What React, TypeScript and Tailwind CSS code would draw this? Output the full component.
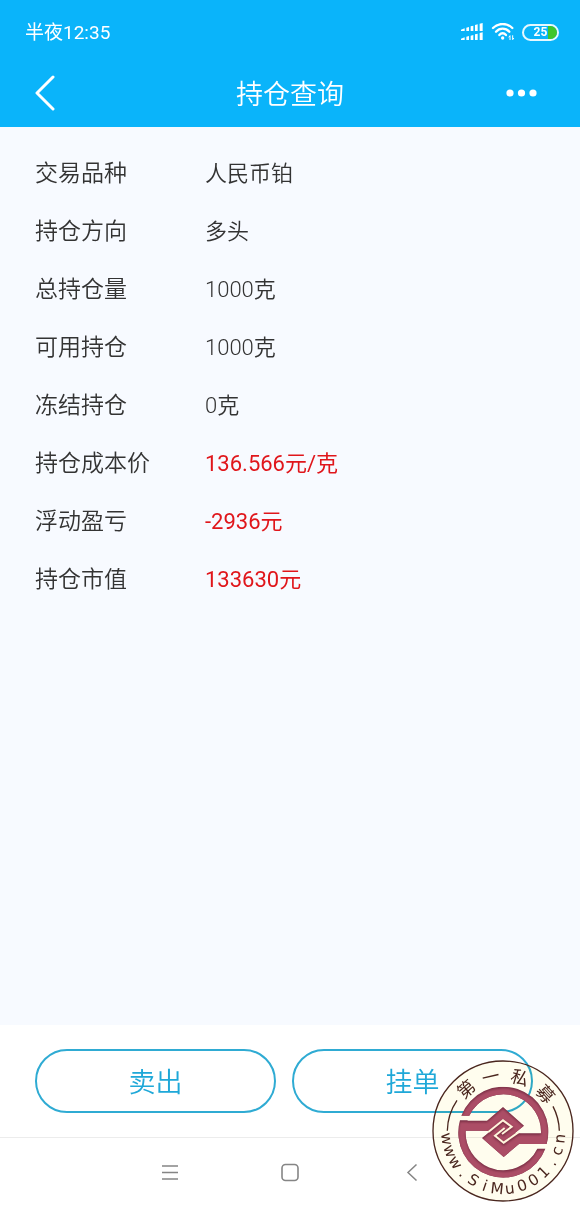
import React from 'react';

interface PositionRow {
  label: string;
  value: string;
  highlight?: boolean;
}

const rows: PositionRow[] = [
  { label: '交易品种', value: '人民币铂' },
  { label: '持仓方向', value: '多头' },
  { label: '总持仓量', value: '1000克' },
  { label: '可用持仓', value: '1000克' },
  { label: '冻结持仓', value: '0克' },
  { label: '持仓成本价', value: '136.566元/克', highlight: true },
  { label: '浮动盈亏', value: '-2936元', highlight: true },
  { label: '持仓市值', value: '133630元', highlight: true }
];

const SignalIcon: React.FC = () => (
  <svg className="w-6 h-[18px]" viewBox="0 0 72 54" fill="currentColor" aria-hidden="true">
    <path d="M3 20l11-4v8H3zM19 14l8-2v12h-8zM32 10l8-2v16h-8zM45 6l8-2v20h-8zM59 2l9-2v24h-9z" />
    <path d="M3 47l11-4v8H3zM19 41l8-2v12h-8zM32 38l8-2v15h-8zM45 34l8-2v19h-8zM59 30l9-2v23h-9z" />
  </svg>
);

const WifiIcon: React.FC = () => (
  <svg className="w-6 h-[18px]" viewBox="0 0 72 54" fill="none" stroke="currentColor" strokeWidth={7} strokeLinecap="round" aria-hidden="true">
    <path d="M6 15C22-1 48-1 64 15" />
    <path d="M15 26C26 14 44 14 55 26" />
    <path d="M25 36C31 29 39 29 45 36" />
    <circle cx="35" cy="45" r="5" fill="currentColor" stroke="none" />
    <path d="M57 50V38l-3 4M65 38v12l3-4" strokeWidth={3} />
  </svg>
);

const BatteryIcon: React.FC = () => (
  <div className="relative flex items-center justify-center w-[37px] h-[17px] rounded-full border-2 border-white/90 overflow-hidden">
    <span className="absolute right-0 w-[9px] h-full bg-[#3fc62c]" />
    <span className="relative text-[12px] leading-3 font-bold">25</span>
  </div>
);

const EMBLEM_SHAPES = [
  'M95 183A135 135 0 0 1 351 268H328A113 113 0 0 0 119 183Z',
  'M347 282A135 135 0 0 1 91 197H114A113 113 0 0 0 323 282Z',
  'M91 198H172L220 157L283 213L255 236H354L350 268H268L222 307L157 250L184 228H88Z'
];

const TOP_CHARS = [
  { char: '第', angle: -41 },
  { char: '一', angle: -13 },
  { char: '私', angle: 17 },
  { char: '募', angle: 48 }
];

const SITE = 'www.SiMu001.cn';

const Watermark: React.FC = () => (
  <svg className="w-[142px] h-[142px]" viewBox="7 16 426 426" role="img" aria-label="第一私募">
    <defs>
      <clipPath id="emblem">
        {EMBLEM_SHAPES.map((d) => <path key={d} d={d} />)}
      </clipPath>
      <filter id="soften">
        <feGaussianBlur stdDeviation="3" />
      </filter>
    </defs>
    <circle cx="220" cy="229" r="210" fill="#fffdee" className="mix-blend-multiply" />
    <circle cx="220" cy="229" r="210" fill="none" stroke="#4a261e" strokeWidth={4} />
    <path d="M53 228A168 168 0 0 1 82 137M389 228A168 168 0 0 0 370 155" fill="none" stroke="#4a261e" strokeWidth={4} />
    <g clipPath="url(#emblem)">
      <rect x="80" y="90" width="290" height="290" fill="#7a2f45" />
      <g transform="translate(0 5)" fill="#ac4e66" filter="url(#soften)">
        {EMBLEM_SHAPES.map((d) => <path key={d} d={d} />)}
      </g>
      <path d="M176 236L220 201L246 220L217 242M266 237L222 268L196 247L225 224" fill="none" stroke="#7a2f45" strokeWidth={8} filter="url(#soften)" />
    </g>
    <path d="M176 232L220 197L246 216L217 238M266 233L222 264L196 243L225 220" fill="none" stroke="#fff6dc" strokeWidth={6} />
    <g fill="#4a261e" textAnchor="middle">
      {TOP_CHARS.map(({ char, angle }) => (
        <text key={char} x="221" y="81" fontSize="53" fontWeight="400" transform={`rotate(${angle} 221 232)`}>{char}</text>
      ))}
      {SITE.split('').map((char, i) => (
        <text key={i} x="221" y="418" fontSize="46" fontFamily="DejaVu Sans, sans-serif" fontWeight="400" transform={`rotate(${83 - i * 12.8} 221 232)`}>{char}</text>
      ))}
    </g>
  </svg>
);

const App: React.FC = () => {
  return (
    <div className="relative flex flex-col min-h-screen bg-white font-['Roboto','Noto_Sans_CJK_SC',sans-serif] font-[350]">
      <header className="bg-[#0ab4fa] text-white">
        <div className="flex items-center justify-between h-16 pl-[25px] pr-[21px]">
          <span className="pt-0.5 text-[19px] leading-6 font-normal">半夜12:35</span>
          <div className="flex items-center gap-[7px]">
            <SignalIcon />
            <WifiIcon />
            <BatteryIcon />
          </div>
        </div>
        <div className="grid grid-cols-3 items-center h-[63px] pb-1.5 px-[35px]">
          <button aria-label="返回">
            <svg className="w-5 h-9" viewBox="0 0 20 36" fill="none" stroke="currentColor" strokeWidth={3} strokeLinecap="round" strokeLinejoin="round">
              <path d="M18 2L2 18l16 16" />
            </svg>
          </button>
          <h1 className="pt-1 text-center text-[27px] leading-8">持仓查询</h1>
          <button className="justify-self-end" aria-label="更多">
            <svg className="w-10 h-2" viewBox="0 0 40 8" fill="currentColor">
              <circle cx="5" cy="4" r="3.6" />
              <circle cx="16.500" cy="4" r="3.6" />
              <circle cx="28" cy="4" r="3.6" />
            </svg>
          </button>
        </div>
      </header>

      <main className="flex-1 bg-[#f7faff] pt-[18px] px-[35px]">
        <dl>
          {rows.map((row) => (
            <div key={row.label} className="grid grid-cols-[170px_1fr] items-center h-[58px] text-[#333]">
              <dt className="text-[23px] leading-8">{row.label}</dt>
              <dd className={row.highlight ? 'text-[22px] leading-8 font-normal text-[#e0161b]' : 'text-[22px] leading-8'}>{row.value}</dd>
            </div>
          ))}
        </dl>
      </main>

      <footer className="flex gap-4 pt-6 pb-6 pl-[35px] pr-[47px]">
        <button className="flex-1 h-16 pt-1 rounded-full border-2 border-[#2fabd3] text-[27px] text-[#1fa8d8]">卖出</button>
        <button className="flex-1 h-16 pt-1 rounded-full border-2 border-[#2fabd3] text-[27px] text-[#1fa8d8]">挂单</button>
      </footer>

      <nav className="flex items-center justify-center gap-[100px] h-[70px] border-t border-[#ececec] text-[#858585]">
        <button aria-label="菜单">
          <svg className="w-5 h-5" viewBox="0 0 20 20" fill="none" stroke="currentColor" strokeWidth={1.4}>
            <path d="M2 3h16M2 9.500h16M2 16h16" />
          </svg>
        </button>
        <button aria-label="主页">
          <svg className="w-5 h-5" viewBox="0 0 20 20" fill="none" stroke="currentColor" strokeWidth={1.6}>
            <rect x="2" y="1.500" width="16" height="16" rx="3.500" />
          </svg>
        </button>
        <button aria-label="后退">
          <svg className="w-5 h-5" viewBox="0 0 20 20" fill="none" stroke="currentColor" strokeWidth={1.5}>
            <path d="M16.500 1.500L8 9.500l8.500 8" />
          </svg>
        </button>
      </nav>

      <div className="absolute right-[6px] bottom-[5px] pointer-events-none">
        <Watermark />
      </div>
    </div>
  );
};

export default App;
